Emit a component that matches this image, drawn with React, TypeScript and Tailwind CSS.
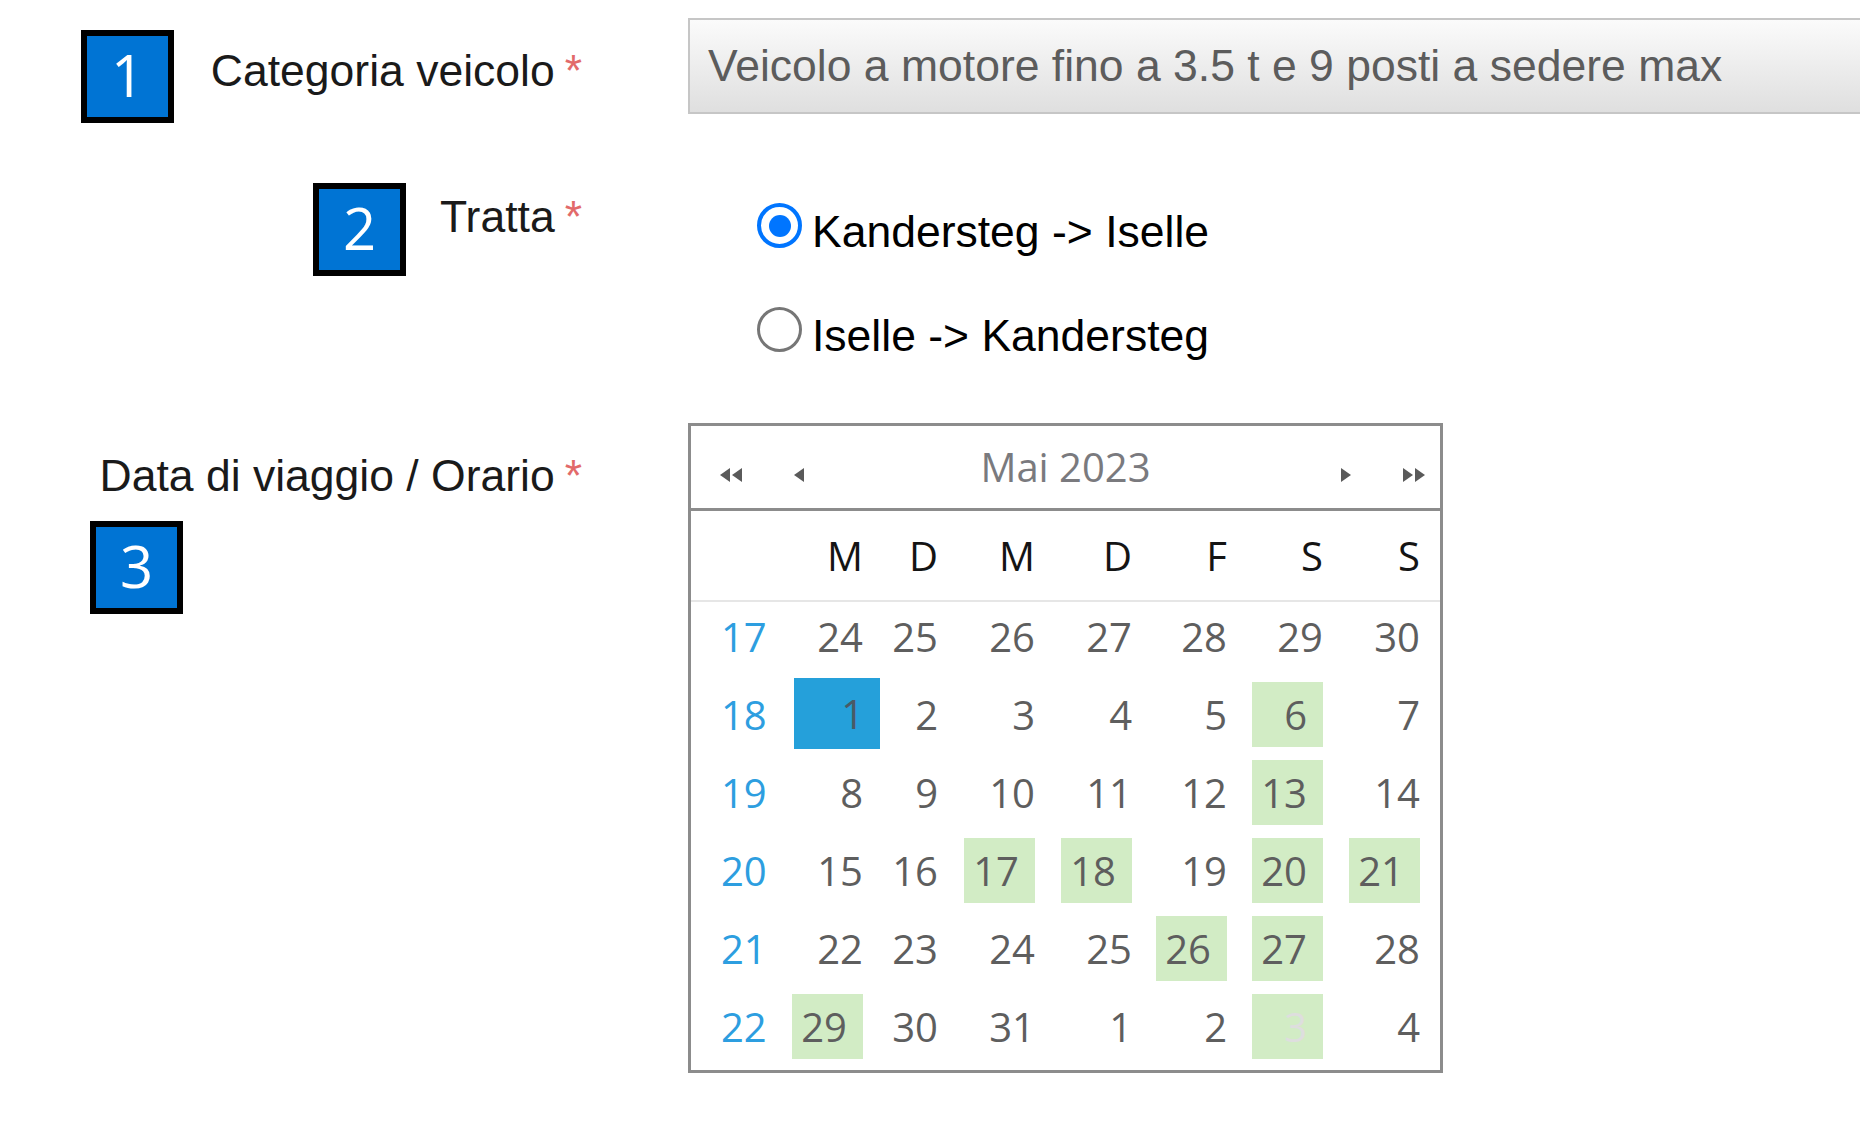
import React from "react";

type Kind = "n" | "g" | "s" | "d";

const weeks: { wk: number; days: [number, Kind][] }[] = [
  { wk: 17, days: [[24, "n"], [25, "n"], [26, "n"], [27, "n"], [28, "n"], [29, "n"], [30, "n"]] },
  { wk: 18, days: [[1, "s"], [2, "n"], [3, "n"], [4, "n"], [5, "n"], [6, "g"], [7, "n"]] },
  { wk: 19, days: [[8, "n"], [9, "n"], [10, "n"], [11, "n"], [12, "n"], [13, "g"], [14, "n"]] },
  { wk: 20, days: [[15, "n"], [16, "n"], [17, "g"], [18, "g"], [19, "n"], [20, "g"], [21, "g"]] },
  { wk: 21, days: [[22, "n"], [23, "n"], [24, "n"], [25, "n"], [26, "g"], [27, "g"], [28, "n"]] },
  { wk: 22, days: [[29, "g"], [30, "n"], [31, "n"], [1, "n"], [2, "n"], [3, "d"], [4, "n"]] },
];

const dayNames = ["M", "D", "M", "D", "F", "S", "S"];

function Badge({ n, pos }: { n: string; pos: string }) {
  return (
    <div
      className={`absolute ${pos} w-[93px] h-[93px] border-[6px] border-black bg-[#0074d4] flex items-center justify-center pb-[4px] text-white text-[58px] leading-none font-['Open_Sans',sans-serif]`}
    >
      {n}
    </div>
  );
}

function Label({ text, extra }: { text: string; extra: string }) {
  return (
    <div className={`w-[688px] shrink-0 flex justify-end pr-[106px] ${extra}`}>
      <span>{text}</span>
      <span className="ml-[10px] text-[#e26a6a]">*</span>
    </div>
  );
}

function Radio({ checked, label, extra }: { checked: boolean; label: string; extra: string }) {
  return (
    <div className={`flex items-start h-[52px] ${extra}`}>
      {checked ? (
        <div className="w-[45px] h-[45px] shrink-0 rounded-full border-[4px] border-[#0075ff] bg-white flex items-center justify-center">
          <div className="w-[22px] h-[22px] rounded-full bg-[#0075ff]" />
        </div>
      ) : (
        <div className="w-[45px] h-[45px] shrink-0 rounded-full border-[3px] border-[#767676] bg-white" />
      )}
      <span className="ml-[10px] mt-[7px] text-black">{label}</span>
    </div>
  );
}

function TriLeft() {
  return (
    <svg width="12" height="16" viewBox="0 0 12 16">
      <path d="M11 1 L1 8 L11 15 Z" fill="#5a5a5a" />
    </svg>
  );
}
function TriRight() {
  return (
    <svg width="12" height="16" viewBox="0 0 12 16">
      <path d="M1 1 L11 8 L1 15 Z" fill="#5a5a5a" />
    </svg>
  );
}
function DoubleLeft() {
  return (
    <svg width="25" height="16" viewBox="0 0 25 16">
      <path d="M12 1 L2 8 L12 15 Z" fill="#5a5a5a" />
      <path d="M24 1 L14 8 L24 15 Z" fill="#5a5a5a" />
    </svg>
  );
}
function DoubleRight() {
  return (
    <svg width="25" height="16" viewBox="0 0 25 16">
      <path d="M1 1 L11 8 L1 15 Z" fill="#5a5a5a" />
      <path d="M13 1 L23 8 L13 15 Z" fill="#5a5a5a" />
    </svg>
  );
}

function DayCell({ d, kind }: { d: number; kind: Kind }) {
  if (kind === "s") {
    return (
      <div className="flex justify-start">
        <div className="-mt-[2px] h-[71px] w-[86px] shrink-0 bg-[#25a0da] flex items-center justify-end pr-[16px] text-[#4a5a66]">
          {d}
        </div>
      </div>
    );
  }
  if (kind === "g" || kind === "d") {
    return (
      <div className="flex justify-end">
        <div
          className={`mt-[2px] h-[65px] w-[71px] shrink-0 bg-[#d2ecc5] flex items-center justify-end pr-[16px] ${
            kind === "d" ? "text-[#dedede]" : "text-[#5e5e5e]"
          }`}
        >
          {d}
        </div>
      </div>
    );
  }
  return (
    <div className="flex justify-end">
      <div className="mt-[2px] h-[65px] flex items-center justify-end text-[#5e5e5e]">{d}</div>
    </div>
  );
}

export default function App() {
  return (
    <div className="relative w-[1860px] h-[1128px] overflow-hidden bg-white font-['Liberation_Sans',Arial,sans-serif] text-[44.5px] leading-none text-[#1a1a1a]">
      <div className="flex flex-col pt-[18px]">
        {/* Row 1: Categoria veicolo */}
        <div className="flex items-start">
          <Label text="Categoria veicolo" extra="mt-[31px]" />
          <div className="w-[1200px] h-[96px] shrink-0 border-2 border-[#c6c6c6] bg-linear-to-b from-[#fbfbfb] to-[#dfdfdf] flex items-center pl-[18px] text-[#5c5c5c]">
            Veicolo a motore fino a 3.5 t e 9 posti a sedere max
          </div>
        </div>

        {/* Row 2: Tratta */}
        <div className="flex items-start mt-[81px]">
          <Label text="Tratta" extra="" />
          <div className="flex flex-col pt-[8px] pl-[69px]">
            <Radio checked label={"Kandersteg -> Iselle"} extra="" />
            <Radio checked={false} label={"Iselle -> Kandersteg"} extra="mt-[52px]" />
          </div>
        </div>

        {/* Row 3: Data di viaggio */}
        <div className="flex items-start mt-[64px]">
          <Label text="Data di viaggio / Orario" extra="mt-[31px]" />
          <div className="w-[755px] shrink-0 border-[3px] border-[#8c8c8c] bg-white font-['Open_Sans',sans-serif] text-[40px] leading-none">
            {/* header */}
            <div className="h-[85px] flex items-center border-b-[3px] border-[#8c8c8c]">
              <div className="w-[114px] shrink-0 flex items-center pl-[27px] mt-[15px]">
                <DoubleLeft />
                <div className="ml-[50px] flex">
                  <TriLeft />
                </div>
              </div>
              <div className="flex-1 text-center text-[40px] text-[#7a7a7e]">Mai 2023</div>
              <div className="w-[114px] shrink-0 flex items-center justify-end pr-[13px] mt-[15px]">
                <TriRight />
                <div className="ml-[50px] flex">
                  <DoubleRight />
                </div>
              </div>
            </div>
            {/* day names */}
            <div className="grid grid-cols-[103px_69px_75px_97px_97px_95px_96px_97px] h-[91px] items-center border-b-2 border-[#e6e6e6] text-[#141414]">
              <div />
              {dayNames.map((n, i) => (
                <div key={i} className="text-right">
                  {n}
                </div>
              ))}
            </div>
            {/* weeks */}
            {weeks.map((w) => (
              <div
                key={w.wk}
                className="grid grid-cols-[103px_69px_75px_97px_97px_95px_96px_97px] h-[78px] items-start"
              >
                <div className="mt-[2px] h-[65px] flex items-center pl-[30px] text-[#2d9ee0]">{w.wk}</div>
                {w.days.map(([d, k], i) => (
                  <DayCell key={i} d={d} kind={k} />
                ))}
              </div>
            ))}
          </div>
        </div>
      </div>

      <Badge n="1" pos="left-[81px] top-[30px]" />
      <Badge n="2" pos="left-[313px] top-[183px]" />
      <Badge n="3" pos="left-[90px] top-[521px]" />
    </div>
  );
}
